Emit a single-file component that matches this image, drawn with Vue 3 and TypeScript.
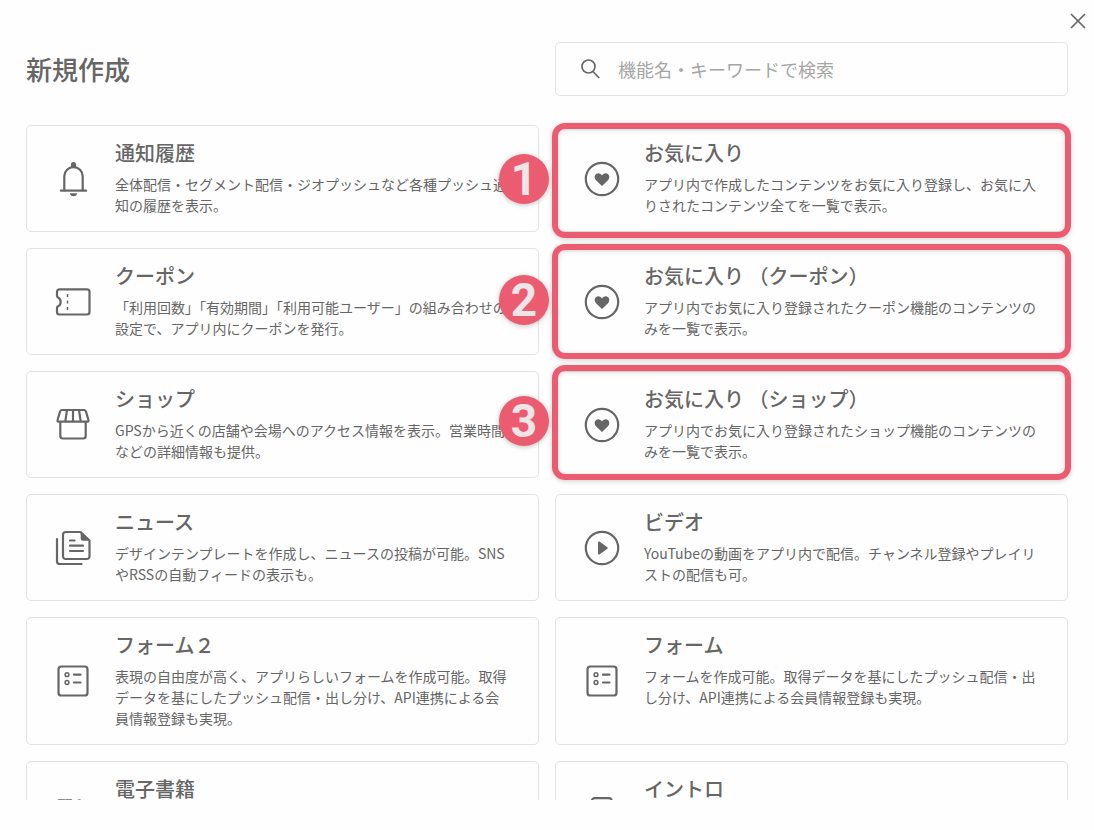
<script setup lang="ts">
type IconName = 'bell' | 'heart' | 'ticket' | 'shop' | 'news' | 'play' | 'form' | 'book' | 'intro'

interface Feature {
  icon: IconName
  title: string
  text: string
}

const features: Feature[] = [
  { icon: 'bell', title: '通知履歴', text: '全体配信・セグメント配信・ジオプッシュなど各種プッシュ通知の履歴を表示。' },
  { icon: 'heart', title: 'お気に入り', text: 'アプリ内で作成したコンテンツをお気に入り登録し、お気に入りされたコンテンツ全てを一覧で表示。' },
  { icon: 'ticket', title: 'クーポン', text: '「利用回数」「有効期間」「利用可能ユーザー」の組み合わせの設定で、アプリ内にクーポンを発行。' },
  { icon: 'heart', title: 'お気に入り （クーポン）', text: 'アプリ内でお気に入り登録されたクーポン機能のコンテンツのみを一覧で表示。' },
  { icon: 'shop', title: 'ショップ', text: 'GPSから近くの店舗や会場へのアクセス情報を表示。営業時間などの詳細情報も提供。' },
  { icon: 'heart', title: 'お気に入り （ショップ）', text: 'アプリ内でお気に入り登録されたショップ機能のコンテンツのみを一覧で表示。' },
  { icon: 'news', title: 'ニュース', text: 'デザインテンプレートを作成し、ニュースの投稿が可能。SNSやRSSの自動フィードの表示も。' },
  { icon: 'play', title: 'ビデオ', text: 'YouTubeの動画をアプリ内で配信。チャンネル登録やプレイリストの配信も可。' },
  { icon: 'form', title: 'フォーム２', text: '表現の自由度が高く、アプリらしいフォームを作成可能。取得データを基にしたプッシュ配信・出し分け、API連携による会員情報登録も実現。' },
  { icon: 'form', title: 'フォーム', text: 'フォームを作成可能。取得データを基にしたプッシュ配信・出し分け、API連携による会員情報登録も実現。' },
  { icon: 'book', title: '電子書籍', text: '' },
  { icon: 'intro', title: 'イントロ', text: '' },
]

const steps: number[] = [1, 2, 3]
</script>

<template>
  <main class="dialog">
    <button class="close" type="button" aria-label="閉じる">
      <svg viewBox="0 0 18 18" width="18" height="18"><path d="M2 2 16 16M16 2 2 16" /></svg>
    </button>

    <header class="head">
      <h1>新規作成</h1>
      <label class="search">
        <svg viewBox="0 0 22 22" width="22" height="22"><circle cx="8.500" cy="8.500" r="6.500" /><path d="m13 13.500 6.200 6.500" /></svg>
        <input type="search" placeholder="機能名・キーワードで検索" aria-label="機能名・キーワードで検索" />
      </label>
    </header>

    <div class="scroll">
      <div class="board">
        <ul class="grid">
          <li v-for="f in features" :key="f.title">
            <button class="card" type="button">
              <span class="icon">
                <svg viewBox="0 0 36 36" width="36" height="36" aria-hidden="true">
                  <g v-if="f.icon === 'bell'">
                    <path d="M9.300 29.500V15.300a9.200 9.200 0 0 1 18.400 0v14.200" />
                    <path class="flat" d="M5 29.600h27" />
                    <path class="solid" d="M15.900 6V3.600a2.600 2.600 0 0 1 5.200 0V6zM15 32.300h7a3.500 3 0 0 1-7 0z" />
                  </g>
                  <g v-else-if="f.icon === 'heart'">
                    <circle cx="18" cy="18" r="16.200" />
                    <path class="solid" d="m18 25-5.500-5.200c-4-4-.6-8.500 2.700-7.400 1.300.3 2.200 1.100 2.800 2 .6-.9 1.500-1.700 2.800-2 3.300-1.100 6.700 3.400 2.700 7.400z" />
                  </g>
                  <g v-else-if="f.icon === 'ticket'">
                    <path d="M4.500 5.300h27.500a2.500 2.500 0 0 1 2.500 2.500v20.200a2.500 2.500 0 0 1-2.500 2.500H4.500a2.500 2.500 0 0 1-2.500-2.500v-4.200c0-1 .6-1.300 1.400-1.700 3-1.700 3-6.700 0-8.400C2.600 13.300 2 13 2 12V7.800a2.500 2.500 0 0 1 2.500-2.500z" />
                    <path class="flat mid" d="M12.500 10v3M12.500 16.500v3M12.500 23v3" />
                  </g>
                  <g v-else-if="f.icon === 'shop'">
                    <path d="M7 3h22a2 2 0 0 1 1.900 1.300L33.500 13.300a1 1 0 0 1-1 1.300h-29a1 1 0 0 1-1-1.300L5.100 4.300A2 2 0 0 1 7 3zM5.300 14.600V29a2.500 2.500 0 0 0 2.500 2.500h20.400a2.500 2.500 0 0 0 2.500-2.500V14.600M12 3.200 10.300 14.300M18 3.200v11.100M24 3.200l1.700 11.100" />
                  </g>
                  <g v-else-if="f.icon === 'news'">
                    <path d="M10.800 2h14.700l9 8.500v15.700a2.800 2.800 0 0 1-2.800 2.800H10.800A2.800 2.800 0 0 1 8 26.200V4.800A2.800 2.800 0 0 1 10.800 2zM2 9v22.200A2.800 2.800 0 0 0 4.800 34H26.500M15 10.500h4.500M15 15.700h13M15 21h13" />
                    <path class="solid" d="M25.700 1.500v7a2.300 2.300 0 0 0 2.300 2.300h7z" />
                  </g>
                  <g v-else-if="f.icon === 'play'">
                    <circle cx="18" cy="18" r="16.200" />
                    <path class="solid" d="M14 12.500c0-1 1-1.400 1.800-.8l7.300 5.200c.8.600.8 1.600 0 2.200l-7.300 5.200c-.8.600-1.800.2-1.800-.8z" />
                  </g>
                  <g v-else-if="f.icon === 'form'">
                    <rect x="3.500" y="3.500" width="29" height="29" rx="2.800" />
                    <path d="M19 11.700h6.500M19 19.500h6.500" />
                    <g class="mid"><circle cx="12" cy="11.700" r="1.900" /><circle cx="12" cy="19.500" r="1.900" /></g>
                  </g>
                  <path v-else-if="f.icon === 'book'" class="mid" d="M3.500 3h6v29h-6zM11 3h5.500v29h-5.500zM21 4l4-1 7 28-4 1z" />
                  <rect v-else x="8" y="1.200" width="19.500" height="33.500" rx="2.500" />
                </svg>
              </span>
              <span class="body">
                <span class="title">{{ f.title }}</span>
                <span class="text">{{ f.text }}</span>
              </span>
            </button>
          </li>
        </ul>

        <ol class="callouts">
          <li v-for="n in steps" :key="n" class="frame"><span class="badge">{{ n }}</span></li>
        </ol>
      </div>
    </div>
  </main>
</template>

<style>
body {
  margin: 0;
  background: #fefefe;
}
</style>

<style scoped>
.dialog {
  box-sizing: border-box;
  position: relative;
  display: flex;
  flex-direction: column;
  height: 100vh;
  padding: 42px 0 30px;
  color: #666;
  font-family: "Noto Sans CJK JP", sans-serif;
}

svg {
  display: block;
  fill: none;
  stroke: #666;
  stroke-width: 1.7;
}

.close {
  position: absolute;
  top: 12px;
  right: 7px;
  padding: 0;
  border: 0;
  background: none;
  cursor: pointer;
}

.head {
  display: grid;
  grid-template-columns: 1fr 1fr;
  gap: 16px;
  align-items: center;
  padding: 0 26px;
}

h1 {
  margin: 0;
  font-size: 26px;
  font-weight: 500;
  line-height: 40px;
}

.search {
  display: flex;
  align-items: center;
  gap: 16px;
  box-sizing: border-box;
  height: 54px;
  padding: 0 24px;
  border: 1px solid #e3e3e3;
  border-radius: 5px;
}

.search input {
  flex: 1;
  min-width: 0;
  padding: 0;
  border: 0;
  outline: 0;
  background: none;
  color: #666;
  font: 18px/28px "Noto Sans CJK JP", sans-serif;
}

.search input::placeholder {
  color: #a6a6a6;
}

.scroll {
  flex: 1;
  min-height: 0;
  padding: 29px 26px 0;
  overflow: hidden;
}

.board {
  position: relative;
}

ul,
ol {
  margin: 0;
  padding: 0;
  list-style: none;
}

.grid {
  display: grid;
  grid-template-columns: 1fr 1fr;
  gap: 16px;
}

.card {
  display: flex;
  box-sizing: border-box;
  width: 100%;
  height: 100%;
  min-height: 107px;
  padding: 0 26px 0 28px;
  border: 1px solid #e3e3e3;
  border-radius: 5px;
  background: none;
  color: inherit;
  font-family: inherit;
  text-align: left;
  cursor: pointer;
}

.icon {
  flex: none;
  align-self: center;
  margin-right: 24px;
}

.icon svg {
  stroke-linejoin: round;
  stroke-linecap: round;
  stroke-width: 2.2;
}

.icon .flat {
  stroke-linecap: butt;
}

.icon .solid {
  fill: #666;
  stroke: none;
}

.icon .mid {
  stroke-width: 1.5;
}

.body {
  flex: 1;
  padding: 13px 0 15px;
}

.title {
  display: block;
  margin-bottom: 7px;
  font-size: 20px;
  font-weight: 500;
  line-height: 28px;
}

.text {
  display: block;
  font-size: 14px;
  line-height: 21px;
}

.callouts {
  position: absolute;
  top: -2px;
  right: -3px;
  left: calc(50% + 5px);
  display: grid;
  gap: 6px;
  pointer-events: none;
}

.frame {
  position: relative;
  box-sizing: border-box;
  height: 115px;
  border: 6px solid #eb5c70;
  border-radius: 13px;
  box-shadow: 0 1px 5px rgba(0, 0, 0, 0.2), inset 0 1px 5px rgba(0, 0, 0, 0.16);
}

.badge {
  position: absolute;
  top: 25px;
  left: -59px;
  width: 50px;
  height: 50px;
  border-radius: 50%;
  background: #eb5c70;
  box-shadow: 0 1px 5px rgba(0, 0, 0, 0.25);
  color: #ece6e8;
  font: bold 46px/50px "Liberation Sans Narrow", Roboto, sans-serif;
  text-align: center;
}
</style>
